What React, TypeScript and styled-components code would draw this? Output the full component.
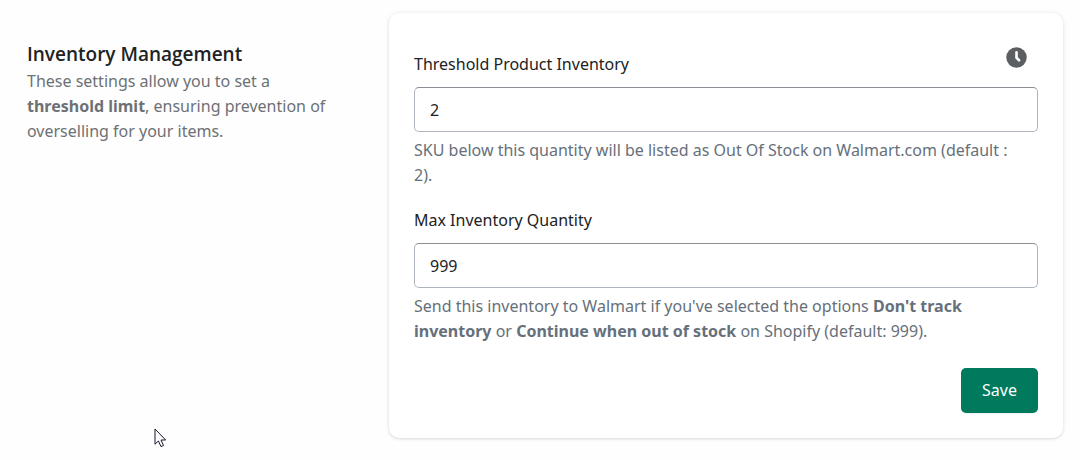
import React, { useState } from "react";
import styled, { createGlobalStyle } from "styled-components";

const GlobalStyle = createGlobalStyle`
  *, *::before, *::after { box-sizing: border-box; }
  body {
    margin: 0;
    background: #fefefe;
    color: #202223;
    font-family: "Segoe UI", "Noto Sans", "Open Sans", sans-serif;
    font-size: 16px;
    line-height: 25px;
  }
`;

const Page = styled.main`
  position: relative;
  display: grid;
  grid-template-columns: minmax(0, 1fr) minmax(0, 2fr);
  align-items: start;
  gap: 25px;
  min-height: 100vh;
  padding: 13px 17px 22px 27px;
`;

const Annotation = styled.section`
  padding: 29px 25px 0 0;
`;

const Title = styled.h2`
  margin: 0;
  font-family: "Segoe UI", "Open Sans", sans-serif;
  font-size: 19px;
  font-weight: 600;
  line-height: 25px;
`;

const Description = styled.p`
  margin: 2px 0 0;
  color: #6d7175;
`;

const Card = styled.form`
  display: flex;
  flex-direction: column;
  padding: 25px;
  border-radius: 10px;
  background: #ffffff;
  box-shadow: 0 0 6px rgba(23, 24, 24, 0.05), 0 1px 3px rgba(0, 0, 0, 0.12);
`;

const Field = styled.div`
  display: flex;
  flex-direction: column;

  & + & {
    margin-top: 20px;
  }
`;

const LabelRow = styled.div`
  display: flex;
  justify-content: space-between;
  align-items: flex-end;
  margin-bottom: 10px;
`;

const Label = styled.label`
  color: #202223;
`;

const HistoryButton = styled.button`
  display: flex;
  padding: 7px 9px 7px 8px;
  border: 0;
  background: transparent;
  color: #5c5f62;
  cursor: pointer;
`;

const Input = styled.input`
  width: 100%;
  height: 45px;
  padding: 0 15px;
  border: 1px solid #aeb4bb;
  border-top-color: #898f94;
  border-radius: 5px;
  background: #ffffff;
  color: #202223;
  font: inherit;
`;

const HelpText = styled.p`
  margin: 6px 0 0;
  padding-right: 16px;
  color: #66707a;
`;

const Strong = styled.strong`
  font-weight: 700;
`;

const Actions = styled.div`
  display: flex;
  justify-content: flex-end;
  margin-top: 24px;
`;

const SaveButton = styled.button`
  height: 45px;
  padding: 0 21px;
  border: 0;
  border-radius: 5px;
  background: #007a5c;
  box-shadow: 0 1px 0 rgba(0, 0, 0, 0.05);
  color: #ffffff;
  font: inherit;
  cursor: pointer;
`;

const Pointer = styled.svg`
  position: absolute;
  left: 154px;
  top: 428px;
  pointer-events: none;
`;

const ClockIcon = () => (
  <svg width="25" height="25" viewBox="0 0 20 20" aria-hidden="true">
    <circle cx="10" cy="10" r="8.2" fill="currentColor" />
    <path
      d="M10 5.8V10.2L12 12.2"
      fill="none"
      stroke="#ffffff"
      strokeWidth="2.1"
      strokeLinecap="round"
      strokeLinejoin="round"
    />
  </svg>
);

export default function App() {
  const [threshold, setThreshold] = useState("2");
  const [maximum, setMaximum] = useState("999");

  return (
    <>
      <GlobalStyle />
      <Page>
        <Annotation>
          <Title>Inventory Management</Title>
          <Description>
            These settings allow you to set a <Strong>threshold limit</Strong>, ensuring
            prevention of overselling for your items.
          </Description>
        </Annotation>
        <Card onSubmit={(event) => event.preventDefault()}>
          <Field>
            <LabelRow>
              <Label htmlFor="threshold">Threshold Product Inventory</Label>
              <HistoryButton type="button" aria-label="View history">
                <ClockIcon />
              </HistoryButton>
            </LabelRow>
            <Input
              id="threshold"
              inputMode="numeric"
              aria-describedby="threshold-help"
              value={threshold}
              onChange={(event) => setThreshold(event.target.value)}
            />
            <HelpText id="threshold-help">
              SKU below this quantity will be listed as Out Of Stock on Walmart.com (default : 2).
            </HelpText>
          </Field>
          <Field>
            <LabelRow>
              <Label htmlFor="maximum">Max Inventory Quantity</Label>
            </LabelRow>
            <Input
              id="maximum"
              inputMode="numeric"
              aria-describedby="maximum-help"
              value={maximum}
              onChange={(event) => setMaximum(event.target.value)}
            />
            <HelpText id="maximum-help">
              Send this inventory to Walmart if you've selected the options{" "}
              <Strong>Don't track inventory</Strong> or{" "}
              <Strong>Continue when out of stock</Strong> on Shopify (default: 999).
            </HelpText>
          </Field>
          <Actions>
            <SaveButton type="submit">Save</SaveButton>
          </Actions>
        </Card>
        <Pointer width="13" height="20" viewBox="0 0 13 20" aria-hidden="true">
          <path
            d="M1 1V16.2L4.4 13L7 18.6L9.5 17.5L7 12H11.7Z"
            fill="#ffffff"
            stroke="#15172a"
            strokeWidth="1"
          />
        </Pointer>
      </Page>
    </>
  );
}
